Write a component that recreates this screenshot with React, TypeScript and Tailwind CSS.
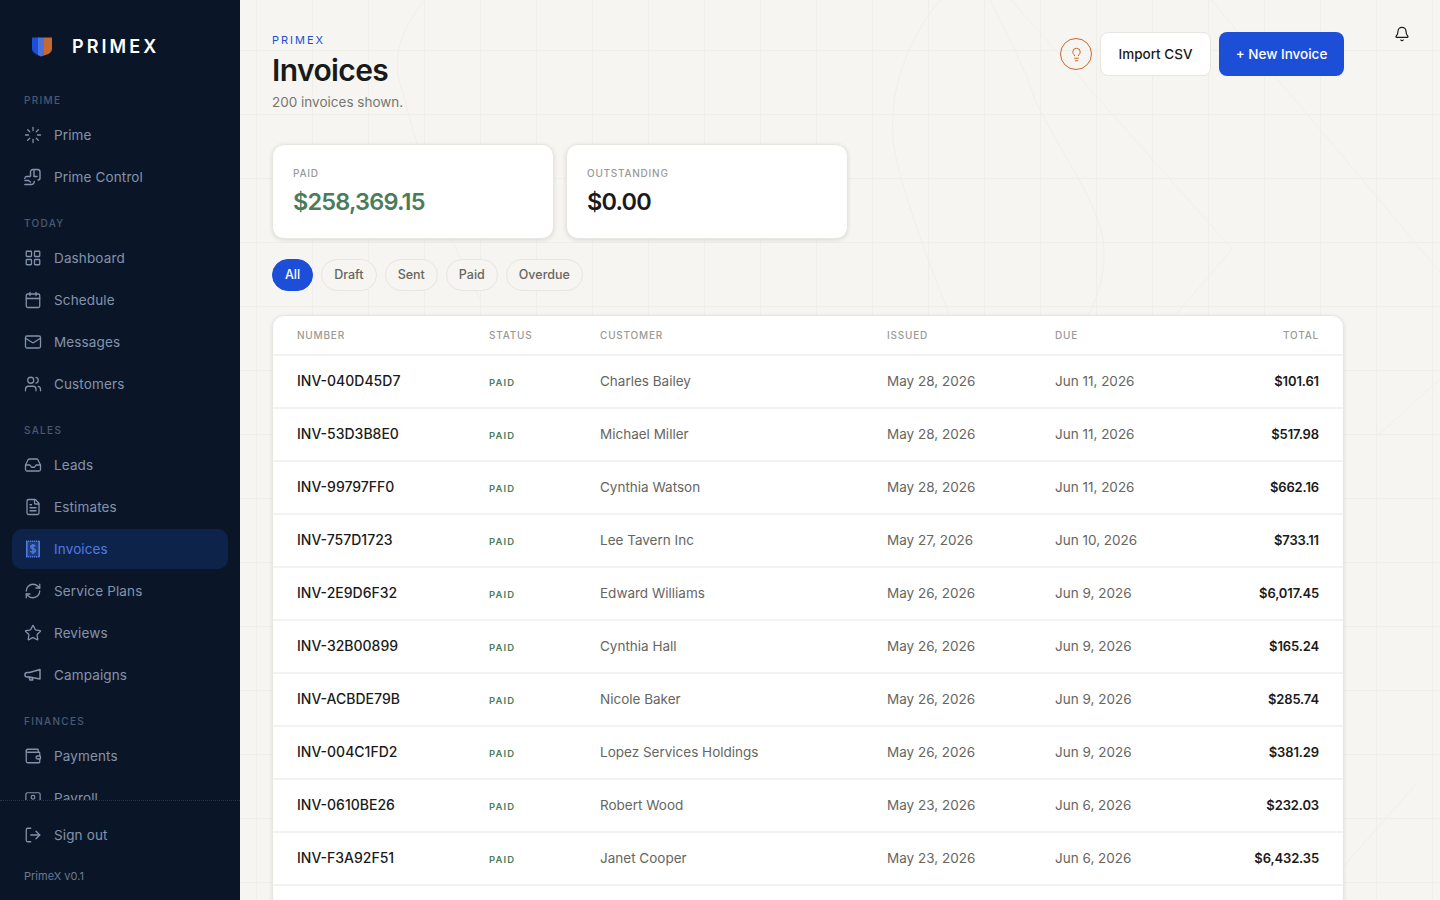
import {
  Bell,
  Calendar,
  FileText,
  Inbox,
  LayoutGrid,
  Lightbulb,
  Loader,
  LogOut,
  Mail,
  RefreshCw,
  Star,
  Users,
  Wallet,
} from 'lucide-react'
import type { ReactNode } from 'react'

const font = "font-['Inter','Noto_Sans',sans-serif]"

function ControlIcon() {
  return (
    <svg width="18" height="18" viewBox="0 0 18 18" fill="none" stroke="currentColor" strokeWidth="1.4" strokeLinecap="round" strokeLinejoin="round">
      <path d="M6.500 8V4c0-1.500 1-2.500 2.500-2.500h4.500c1.500 0 2.500 1 2.500 2.500v6c0 1.500-1 2-2 2" />
      <path d="M10 2v6.500h3" />
      <path d="M6 8.500H2.500C1.500 8.500 1 9 .8 10.500" />
      <path d="M.8 16.500h7c1.500 0 2.200-1 2.500-3" />
      <path d="M1 12.500h3.500l2 1.500" />
    </svg>
  )
}

function InvoiceIcon() {
  return (
    <svg width="18" height="18" viewBox="0 0 18 18" fill="none" stroke="currentColor">
      <rect x="2.500" y="1.500" width="13" height="15" fill="currentColor" fillOpacity="0.3" stroke="none" />
      <path d="M2.800 1v16M15.200 1v16" strokeWidth="1.600" />
      <path d="M2 1.200h14M2 16.800h14" strokeWidth="1.500" strokeDasharray="1.300 0.700" />
      <path d="M11.400 6.300c-.4-.8-1.200-1.100-2.400-1.100-1.300 0-2.200.7-2.200 1.700 0 2.300 4.600 1.200 4.600 3.600 0 1.100-1 1.800-2.400 1.800-1.200 0-2.100-.4-2.500-1.300M9 4v10" strokeWidth="1.400" />
    </svg>
  )
}

function CampaignIcon() {
  return (
    <svg width="18" height="18" viewBox="0 0 18 18" fill="none" stroke="currentColor" strokeWidth="1.500" strokeLinecap="round" strokeLinejoin="round">
      <path d="M16 3.500v9.500L5.500 11H3.200a2.200 2.200 0 0 1 0-4.500h2.300z" />
      <path d="M5 11l1 3h2.800l-.8-2.400" />
    </svg>
  )
}

function PayrollIcon() {
  return (
    <svg width="18" height="18" viewBox="0 0 24 24" fill="none" stroke="currentColor" strokeWidth="1.600" strokeLinejoin="round">
      <rect x="2.500" y="5" width="19" height="14" rx="2" />
      <circle cx="12" cy="11" r="2.500" />
    </svg>
  )
}

function Shield() {
  return (
    <svg width="22" height="22" viewBox="0 0 22 22">
      <path d="M1 2.500h7v17.500C5 19.600 1 17.500 1 13.500z" fill="#1d4ed8" />
      <path d="M7 2.500h6v17.900l-3 1.100-3-1.300z" fill="#4a72dc" />
      <path d="M13 2.500h8v11c0 4-4 6-8 7z" fill="#c9682c" />
    </svg>
  )
}

type NavItem = { label: string; icon: ReactNode; active?: boolean }

const I = { size: 18, strokeWidth: 1.7 }

const groups: { title: string; items: NavItem[] }[] = [
  {
    title: 'PRIME',
    items: [
      { label: 'Prime', icon: <Loader {...I} /> },
      { label: 'Prime Control', icon: <ControlIcon /> },
    ],
  },
  {
    title: 'TODAY',
    items: [
      { label: 'Dashboard', icon: <LayoutGrid {...I} /> },
      { label: 'Schedule', icon: <Calendar {...I} /> },
      { label: 'Messages', icon: <Mail {...I} /> },
      { label: 'Customers', icon: <Users {...I} /> },
    ],
  },
  {
    title: 'SALES',
    items: [
      { label: 'Leads', icon: <Inbox {...I} /> },
      { label: 'Estimates', icon: <FileText {...I} /> },
      { label: 'Invoices', icon: <InvoiceIcon />, active: true },
      { label: 'Service Plans', icon: <RefreshCw {...I} /> },
      { label: 'Reviews', icon: <Star {...I} /> },
      { label: 'Campaigns', icon: <CampaignIcon /> },
    ],
  },
  {
    title: 'FINANCES',
    items: [
      { label: 'Payments', icon: <Wallet {...I} /> },
      { label: 'Payroll', icon: <PayrollIcon /> },
    ],
  },
]

const invoices = [
  ['INV-040D45D7', 'Charles Bailey', 'May 28, 2026', 'Jun 11, 2026', '$101.61'],
  ['INV-53D3B8E0', 'Michael Miller', 'May 28, 2026', 'Jun 11, 2026', '$517.98'],
  ['INV-99797FF0', 'Cynthia Watson', 'May 28, 2026', 'Jun 11, 2026', '$662.16'],
  ['INV-757D1723', 'Lee Tavern Inc', 'May 27, 2026', 'Jun 10, 2026', '$733.11'],
  ['INV-2E9D6F32', 'Edward Williams', 'May 26, 2026', 'Jun 9, 2026', '$6,017.45'],
  ['INV-32B00899', 'Cynthia Hall', 'May 26, 2026', 'Jun 9, 2026', '$165.24'],
  ['INV-ACBDE79B', 'Nicole Baker', 'May 26, 2026', 'Jun 9, 2026', '$285.74'],
  ['INV-004C1FD2', 'Lopez Services Holdings', 'May 26, 2026', 'Jun 9, 2026', '$381.29'],
  ['INV-0610BE26', 'Robert Wood', 'May 23, 2026', 'Jun 6, 2026', '$232.03'],
  ['INV-F3A92F51', 'Janet Cooper', 'May 23, 2026', 'Jun 6, 2026', '$6,432.35'],
]

function Sidebar() {
  return (
    <aside className="flex h-screen w-[240px] flex-shrink-0 flex-col bg-[#0a1628]">
      <div className="flex h-[85px] flex-shrink-0 items-center gap-[19px] pt-[7px] pl-[31px]">
        <Shield />
        <span className="text-[18px] font-semibold tracking-[0.17em] text-white">PRIMEX</span>
      </div>
      <nav className="min-h-0 flex-1 overflow-hidden px-3">
        {groups.map((g) => (
          <div key={g.title} className="mb-[11px]">
            <p className="flex h-[30px] items-center px-3 text-[10px] font-medium tracking-[0.13em] text-[#4a5a73]">{g.title}</p>
            <div className="flex flex-col gap-[2px]">
              {g.items.map((item) => (
                <a
                  key={item.label}
                  className={`flex h-[40px] items-center gap-3 rounded-[10px] px-3 text-[13.500px] tracking-[0.01em] ${
                    item.active ? 'bg-[#0e2349] text-[#4f7be6]' : 'text-[#8493ab]'
                  }`}
                >
                  <span className="flex w-[18px] justify-center">{item.icon}</span>
                  {item.label}
                </a>
              ))}
            </div>
          </div>
        ))}
      </nav>
      <div className="h-[100px] flex-shrink-0 border-t border-dotted border-[#26344d] px-3 pt-[14px]">
        <a className="flex h-[40px] items-center gap-3 px-3 text-[13.500px] tracking-[0.01em] text-[#8493ab]">
          <LogOut {...I} />
          Sign out
        </a>
        <p className="mt-[13px] px-3 text-[11px] text-[#6b7a92]">PrimeX v0.1</p>
      </div>
    </aside>
  )
}

function StatCard({ label, value, color }: { label: string; value: string; color: string }) {
  return (
    <div className="h-[95px] w-[282px] rounded-[12px] border border-[#e7e6e1] bg-white pt-[22px] pl-[20px] shadow-[0_1px_4px_rgba(0,0,0,0.12)]">
      <p className="text-[10px] leading-[12px] font-medium tracking-[0.075em] text-[#9a9a96]">{label}</p>
      <p className={`mt-[7px] text-[23.500px] leading-[32px] font-semibold tracking-[-0.035em] ${color}`}>{value}</p>
    </div>
  )
}

function Filters() {
  const pills = ['All', 'Draft', 'Sent', 'Paid', 'Overdue']
  return (
    <div className="mt-[20px] flex gap-2">
      {pills.map((p, i) => (
        <button
          key={p}
          className={`h-[32px] rounded-full border px-[12px] text-[12.500px] font-medium ${
            i === 0 ? 'border-[#1d4ed8] bg-[#1d4ed8] text-white' : 'border-[#e7e6e1] bg-[#f6f5f1] text-[#66665f]'
          }`}
        >
          {p}
        </button>
      ))}
    </div>
  )
}

function InvoiceTable() {
  const head = 'h-[39px] px-0 pt-[1px] text-left text-[10px] font-medium tracking-[0.08em] text-[#9a9a96]'
  return (
    <div className="mt-[24px] overflow-hidden rounded-t-[12px] border border-[#e7e6e1] bg-white shadow-[0_1px_4px_rgba(0,0,0,0.1)]">
      <table className="w-full table-fixed border-collapse">
        <colgroup>
          <col className="w-[216px]" />
          <col className="w-[111px]" />
          <col className="w-[287px]" />
          <col className="w-[168px]" />
          <col />
          <col className="w-[24px]" />
        </colgroup>
        <thead>
          <tr className="border-b-2 border-[#f3f2ee]">
            <th className={`${head} pl-[24px]`}>NUMBER</th>
            <th className={head}>STATUS</th>
            <th className={head}>CUSTOMER</th>
            <th className={head}>ISSUED</th>
            <th className={head}>
              <div className="flex justify-between">
                <span>DUE</span>
                <span>TOTAL</span>
              </div>
            </th>
            <th />
          </tr>
        </thead>
        <tbody>
          {invoices.map((r) => (
            <tr key={r[0]} className="h-[53px] border-b-2 border-[#f3f2ee]">
              <td className="pb-[2px] pl-[24px] text-[14px] font-medium text-[#1a1a1a]">{r[0]}</td>
              <td className="pt-[2px] text-[9.500px] font-semibold tracking-[0.12em] text-[#4a7c59]">PAID</td>
              <td className="pb-[2px] text-[13.500px] text-[#66665f]">{r[1]}</td>
              <td className="pb-[2px] text-[13.500px] text-[#66665f]">{r[2]}</td>
              <td className="text-[13.500px] text-[#66665f]">
                <div className="flex items-center justify-between">
                  <span className="pb-[2px]">{r[3]}</span>
                  <span className="text-[13px] font-semibold tracking-[-0.01em] text-[#1a1a1a]">{r[4]}</span>
                </div>
              </td>
              <td />
            </tr>
          ))}
          <tr className="h-[53px]">
            <td colSpan={6} />
          </tr>
        </tbody>
      </table>
    </div>
  )
}

export default function App() {
  return (
    <div className={`flex h-screen overflow-hidden ${font}`}>
      <Sidebar />
      <main className="relative min-w-0 flex-1 overflow-hidden bg-[#f6f5f1]">
        {/* Faint drafting grid behind the page */}
        <div className="pointer-events-none absolute inset-0 bg-[linear-gradient(to_right,#efefea_1px,transparent_1px),linear-gradient(to_bottom,#efefea_1px,transparent_1px)] bg-[size:56px_64px] bg-[position:16px_50px]" />
        <svg className="pointer-events-none absolute inset-0" width="1200" height="900" fill="none" stroke="#f0efeb" strokeWidth="1">
          <path d="M771 0 L992 249 L910 345" />
          <path d="M750 0 C770 40 790 80 795 100 C830 170 864 210 864 253 C864 290 850 320 824 345" />
          <path d="M700 0 C660 50 650 100 653 138 C655 170 680 240 709 314" />
          <path d="M971 0 L1200 272" />
          <path d="M1200 379 L1136 437" />
          <path d="M1177 783 L1103 867" />
          <path d="M185 0 C160 30 150 60 163 93 C180 160 200 220 240 300" />
        </svg>
        <button className="absolute top-[26px] right-[30px] z-10 text-[#1a1a1a]">
          <Bell size={16} strokeWidth={1.8} />
        </button>
        <div className="relative w-[1136px] px-8 pt-[32px]">
          <header className="flex items-start justify-between">
            <div>
              <p className="text-[11px] leading-[16px] tracking-[0.18em] text-[#1d4ed8]">PRIMEX</p>
              <h1 className="mt-[4px] text-[30px] leading-[36px] font-semibold tracking-[-0.02em] text-[#1a1a1a]">Invoices</h1>
              <p className="mt-[4px] text-[13.500px] text-[#77776f]">200 invoices shown.</p>
            </div>
            <div className="flex items-center gap-2">
              <span className="flex h-[32px] w-[32px] items-center justify-center rounded-full border border-[#c9682c] text-[#c9682c]">
                <Lightbulb size={15} strokeWidth={1.6} />
              </span>
              <button className="h-[44px] w-[111px] rounded-[8px] border border-[#e7e6e1] bg-white text-[13.500px] font-medium text-[#1a1a1a]">
                Import CSV
              </button>
              <button className="h-[44px] w-[125px] rounded-[8px] bg-[#1d4ed8] text-[13.500px] font-medium text-white">
                + New Invoice
              </button>
            </div>
          </header>
          <div className="mt-[32px] flex gap-3">
            <StatCard label="PAID" value="$258,369.15" color="text-[#4a7c59]" />
            <StatCard label="OUTSTANDING" value="$0.00" color="text-[#1a1a1a]" />
          </div>
          <Filters />
          <InvoiceTable />
        </div>
      </main>
    </div>
  )
}
